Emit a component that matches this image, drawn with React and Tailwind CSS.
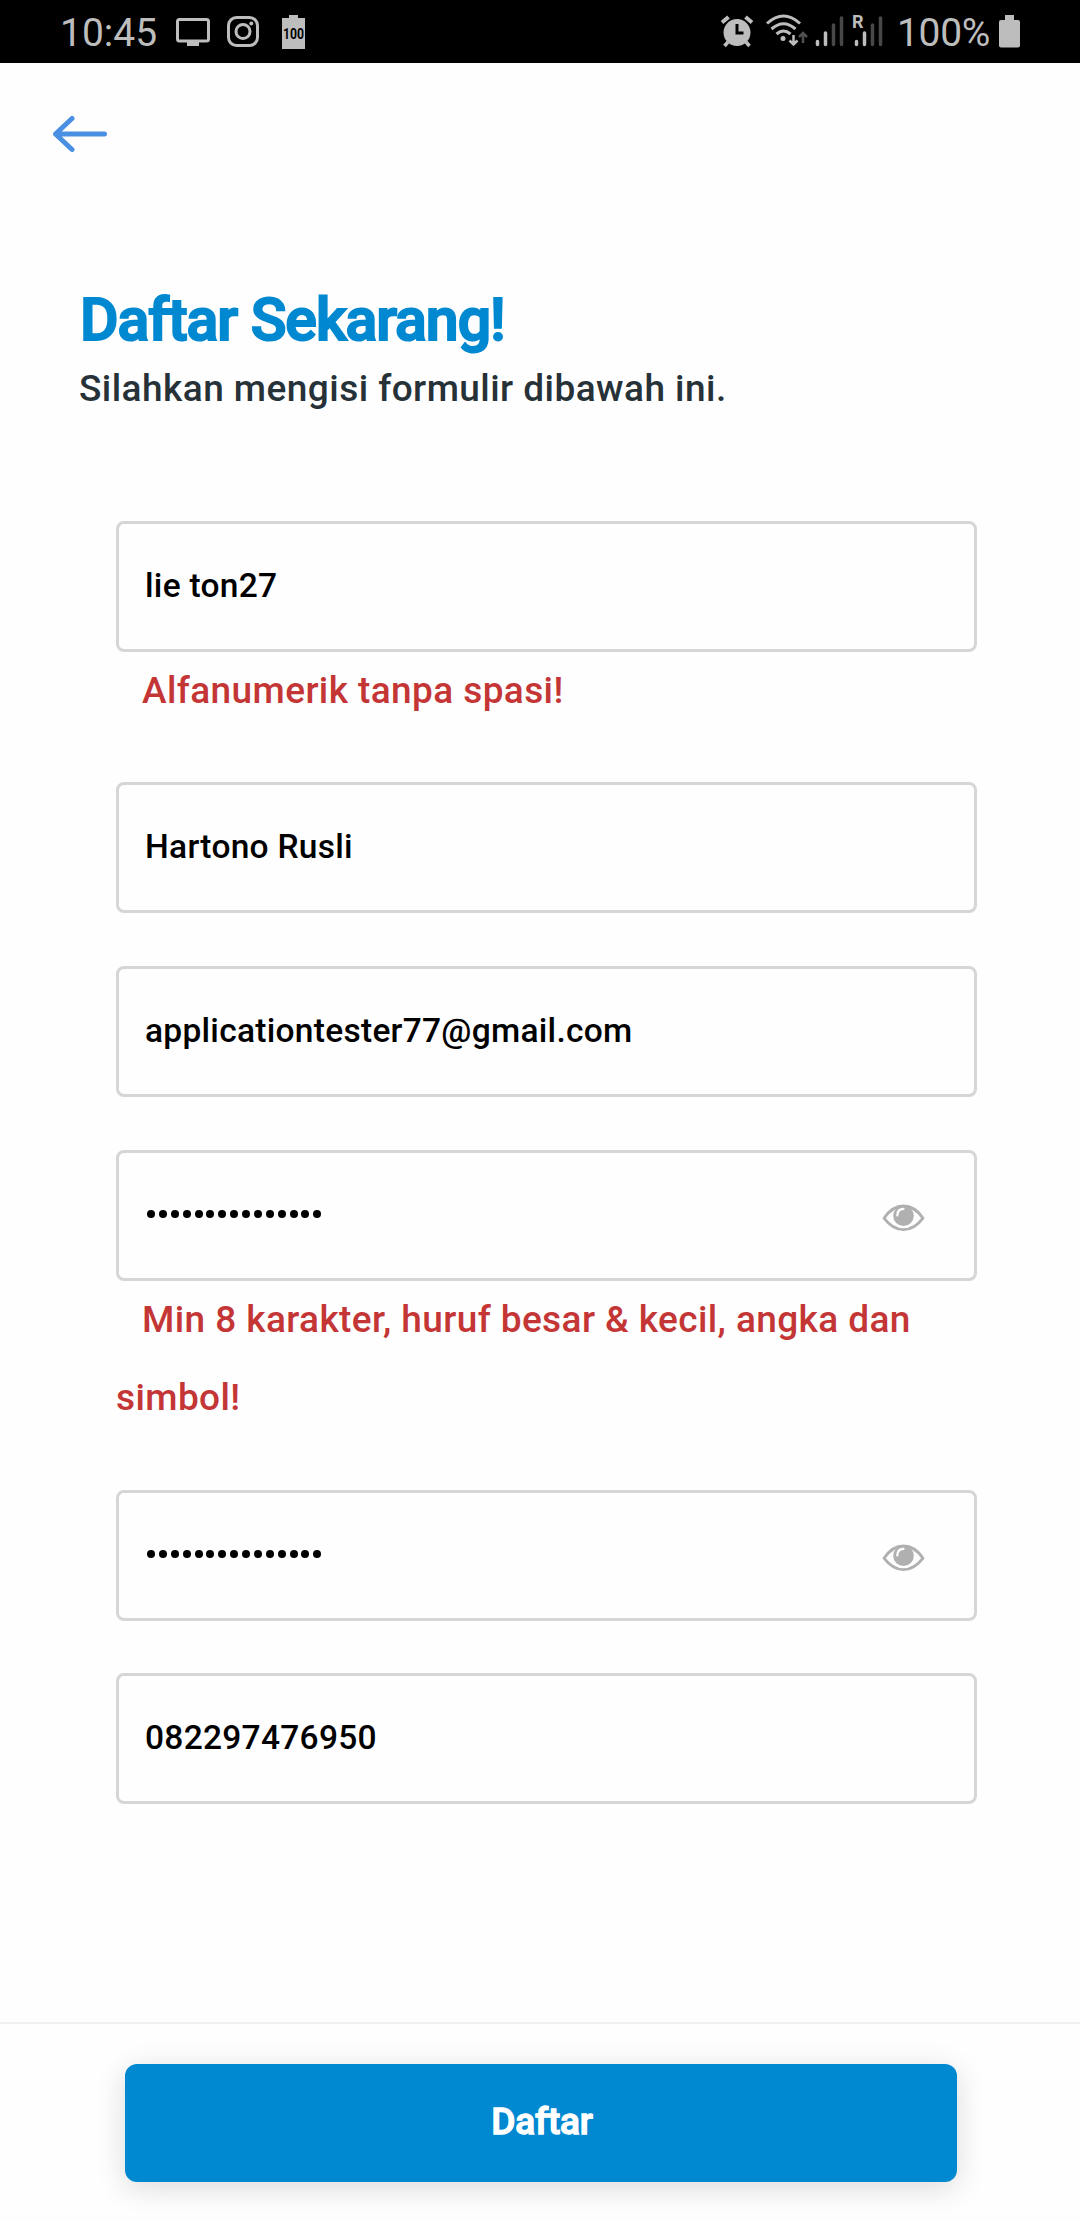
import React from "react";

function StatusBar() {
  return (
    <header className="flex h-[63px] items-center bg-black pl-[60px] text-[#bdbdbd]">
      <span className="w-[116px] text-[39px] leading-[63px] whitespace-nowrap pt-1">10:45</span>
      <svg className="h-[63px] w-[140px]" viewBox="176 0 140 63" fill="none">
        <rect x="177.500" y="19.500" width="31" height="21.500" rx="2" stroke="#bdbdbd" strokeWidth="3" />
        <path d="M187 41h12v5h-12z" fill="#bdbdbd" />
        <rect x="228.500" y="17.500" width="29" height="28" rx="8" stroke="#bdbdbd" strokeWidth="3" />
        <circle cx="243" cy="31.500" r="7" stroke="#bdbdbd" strokeWidth="3" />
        <circle cx="251.300" cy="23.500" r="2" fill="#bdbdbd" />
        <path d="M289 15h9v3h7v31h-23V18h7z" fill="#bdbdbd" />
        <text x="293.500" y="39" textAnchor="middle" fontSize="14.500" fontWeight="700" textLength="21" lengthAdjust="spacingAndGlyphs" fill="#000">100</text>
      </svg>
      <svg className="ml-[404px] h-[63px] w-[164px]" viewBox="720 0 164 63" fill="none">
        <circle cx="737" cy="32.500" r="13.500" fill="#bdbdbd" />
        <path d="M722 22.500l6.500-5.500M745.500 17l6.500 5.500" stroke="#bdbdbd" strokeWidth="4" />
        <path d="M728 42l-3.500 4M746 42l3.500 4" stroke="#bdbdbd" strokeWidth="3.500" />
        <path d="M737 24v9h6.500" stroke="#000" strokeWidth="3" />
        <g stroke="#bdbdbd" strokeWidth="3">
          <path d="M767 23.500q16.500-15 33 0" />
          <path d="M771.500 29q12-10.500 24 0" />
          <path d="M776.500 34q7-6 14 0" />
        </g>
        <circle cx="783" cy="38.500" r="2.500" fill="#bdbdbd" />
        <path d="M793.500 35v9M789.500 40.500l4 4 4-4" stroke="#bdbdbd" strokeWidth="2.500" />
        <path d="M803 43v-9M799 37l4-4 4 4" stroke="#505050" strokeWidth="2.500" />
        <g strokeWidth="3.500" strokeLinecap="round">
          <path d="M817.500 41.500v3M825.500 33v11.500" stroke="#bdbdbd" />
          <path d="M833.500 25v19.500M841.500 18v26.500" stroke="#484848" />
          <path d="M856.500 41.500v3M864.500 33v11.500" stroke="#bdbdbd" />
          <path d="M872.500 25v19.500M880.500 18v26.500" stroke="#484848" />
        </g>
        <text x="852" y="28" fontSize="18" fontWeight="700" fill="#bdbdbd">R</text>
      </svg>
      <span className="ml-[13px] w-[102px] pt-1 text-[39px] leading-[63px] tracking-[-0.300px] whitespace-nowrap">100%</span>
      <svg className="h-[63px] w-[22px]" viewBox="999 0 22 63">
        <path d="M1005 15h9v5h4q2 0 2 2v23.500q0 2-2 2h-17q-2 0-2-2V22q0-2 2-2h4z" fill="#bdbdbd" />
      </svg>
    </header>
  );
}

function Eye() {
  return (
    <svg className="h-[28px] w-[43px]" viewBox="0 0 43 28" fill="none">
      <path d="M2 14.200C7.500 6 14 2 21.500 2S35.500 6 41 14.200C35.500 21.500 29 25.700 21.500 25.700S7.500 21.500 2 14.200z" stroke="#b0b0b0" strokeWidth="2.800" strokeLinejoin="round" />
      <circle cx="21.500" cy="11.700" r="10.300" fill="#b0b0b0" />
      <path d="M15.300 11.500Q15.300 5 21.500 4.800" stroke="#fff" strokeWidth="2.200" strokeLinecap="round" />
    </svg>
  );
}

function Field({ value, secret }) {
  return (
    <div className="flex h-[131px] items-center justify-between rounded-[8px] border-[3px] border-[#d6d6d6] pl-[26px] pr-[49px]">
      {secret ? (
        <div className="mb-1 flex gap-[3.880px] pl-[2px]">
          {Array.from({ length: 15 }, (_, i) => (
            <span key={i} className="size-[8px] rounded-full bg-black" />
          ))}
        </div>
      ) : (
        <span className="pb-px text-[33.500px] leading-10 font-medium tracking-[0.280px] text-black">{value}</span>
      )}
      {secret && <div className="pt-1"><Eye /></div>}
    </div>
  );
}

function FieldError({ children }) {
  return (
    <p className="indent-[26px] text-[37px] leading-[78px] font-medium tracking-[0.400px] text-[#c43636]">{children}</p>
  );
}

export default function App() {
  return (
    <div className="flex h-[2220px] w-[1080px] flex-col bg-[#fefefe] [font-family:Roboto,sans-serif]">
      <StatusBar />
      <nav className="pt-[52px] pl-[52px]">
        <svg className="h-[38px] w-[56px]" viewBox="52 115 56 38" fill="none" stroke="#4a90e2" strokeWidth="5" strokeLinecap="round" strokeLinejoin="round">
          <path d="M72 118.500L55.500 134L72 149.500M56 134H104.500" />
        </svg>
      </nav>
      <div className="pt-[131px] pl-[79px]">
        <h1 className="pl-px text-[59px] leading-[72px] font-medium tracking-[-1.060px] text-[#0088d1] [-webkit-text-stroke:2px_#0088d1]">Daftar Sekarang!</h1>
        <p className="text-[37px] leading-[65px] font-medium tracking-[0.450px] text-[#263238]">Silahkan mengisi formulir dibawah ini.</p>
      </div>
      <main className="mt-[100px] ml-[116px] w-[861px]">
        <Field value="lie ton27" />
        <FieldError>Alfanumerik tanpa spasi!</FieldError>
        <div className="mt-[52px] flex flex-col gap-[53px]">
          <Field value="Hartono Rusli" />
          <Field value="applicationtester77@gmail.com" />
          <Field secret />
        </div>
        <FieldError>Min 8 karakter, huruf besar &amp; kecil, angka dan simbol!</FieldError>
        <div className="mt-[53px] flex flex-col gap-[52px]">
          <Field secret />
          <Field value="082297476950" />
        </div>
      </main>
      <footer className="mt-auto h-[198px] border-t-2 border-[#f0f0f0] pt-[40px] pl-[125px]">
        <button className="flex h-[118px] w-[832px] items-center justify-center rounded-[12px] bg-[#0088d1] pb-[2px] pl-[2px] text-[37px] font-medium tracking-[-0.200px] text-white [-webkit-text-stroke:1.300px_#fff] shadow-[0_6px_30px_rgba(0,0,0,0.14)]">Daftar</button>
      </footer>
    </div>
  );
}
